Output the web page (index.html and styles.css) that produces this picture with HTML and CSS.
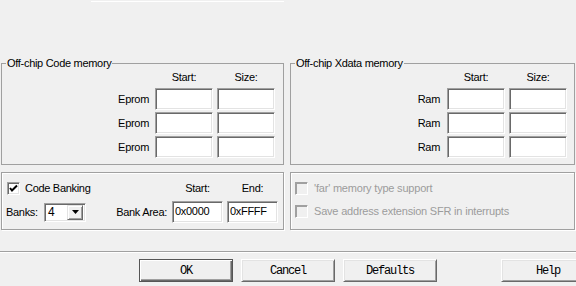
FILE: index.html
```html
<!DOCTYPE html>
<html lang="en">
<head>
    <meta charset="UTF-8">
    <meta name="viewport" content="width=device-width, initial-scale=1.0">
    <title>Options for Target - BL51 Locate</title>
    <link rel="stylesheet" href="styles.css">
</head>
<body>
    <div class="top-edge"></div>

    <div class="memory-row">
        <fieldset class="group group-left">
            <legend>Off-chip Code memory</legend>
            <div class="mem-grid">
                <span></span>
                <span class="col-head">Start:</span>
                <span class="col-head">Size:</span>

                <label class="row-label">Eprom</label>
                <input class="field" type="text">
                <input class="field" type="text">

                <label class="row-label">Eprom</label>
                <input class="field" type="text">
                <input class="field" type="text">

                <label class="row-label">Eprom</label>
                <input class="field" type="text">
                <input class="field" type="text">
            </div>
        </fieldset>

        <fieldset class="group group-right">
            <legend>Off-chip Xdata memory</legend>
            <div class="mem-grid">
                <span></span>
                <span class="col-head">Start:</span>
                <span class="col-head">Size:</span>

                <label class="row-label">Ram</label>
                <input class="field" type="text">
                <input class="field" type="text">

                <label class="row-label">Ram</label>
                <input class="field" type="text">
                <input class="field" type="text">

                <label class="row-label">Ram</label>
                <input class="field" type="text">
                <input class="field" type="text">
            </div>
        </fieldset>
    </div>

    <div class="option-row">
        <div class="box box-left">
            <div class="bank-grid">
                <label class="check-line">
                    <span class="check">
                        <svg width="11" height="11" viewBox="0 0 11 11"><polyline points="2,5 4,7.5 9,2.5" fill="none" stroke="#000" stroke-width="2"/></svg>
                    </span>
                    Code Banking
                </label>
                <span class="col-head">Start:</span>
                <span class="col-head">End:</span>

                <div class="bank-line">
                    <span class="banks-label">Banks:</span>
                    <div class="combo">
                        <span class="combo-value">4</span>
                        <span class="combo-btn">
                            <svg width="7" height="4" viewBox="0 0 7 4"><polygon points="0,0 7,0 3.5,4" fill="#000"/></svg>
                        </span>
                    </div>
                    <span class="area-label">Bank Area:</span>
                </div>
                <input class="field field-text" type="text" value="0x0000">
                <input class="field field-text" type="text" value="0xFFFF">
            </div>
        </div>

        <div class="box box-right">
            <label class="check-line disabled">
                <span class="check"></span>
                'far' memory type support
            </label>
            <label class="check-line disabled">
                <span class="check"></span>
                Save address extension SFR in interrupts
            </label>
        </div>
    </div>

    <div class="separator"></div>

    <div class="buttons">
        <button class="btn btn-default">OK</button>
        <button class="btn">Cancel</button>
        <button class="btn">Defaults</button>
        <button class="btn btn-help">Help</button>
    </div>
</body>
</html>
```

FILE: styles.css
```css
body {
    margin: 0;
    width: 576px;
    height: 286px;
    overflow: hidden;
    background-color: #f0f0f0;
    font-family: "Liberation Sans", Arial, sans-serif;
    font-size: 11px;
    letter-spacing: -0.3px;
    color: #000;
}
.top-edge {
    width: 193px;
    height: 1px;
    margin: 1px 0 0 91px;
    background-color: #fff;
}

/* upper group boxes */
.memory-row {
    display: flex;
    gap: 6px;
    margin: 55px 0 0 1px;
}
.group {
    box-sizing: border-box;
    margin: 0;
    padding: 0 8px 6px 4px;
    border: 1px solid #a0a0a0;
    min-width: 0;
}
.group-left {
    width: 283px;
}
.group-right {
    width: 285px;
    padding-right: 7px;
}
.group legend {
    padding: 0 1px;
    margin-left: 0;
    line-height: 13px;
}
.mem-grid {
    display: grid;
    grid-template-columns: 1fr 58px 58px;
    grid-template-rows: 16px repeat(3, 22px);
    column-gap: 4px;
    row-gap: 2px;
}
.col-head {
    text-align: center;
    line-height: 14px;
    align-self: start;
}
.row-label {
    text-align: right;
    line-height: 22px;
    padding-right: 2px;
}
.group-right .row-label {
    padding-right: 3px;
}
.field {
    box-sizing: border-box;
    width: 100%;
    height: 22px;
    margin: 0;
    padding: 0 2px 3px;
    border: 1px solid;
    border-color: #a0a0a0 #fff #fff #a0a0a0;
    box-shadow: inset 1px 1px 0 #696969, inset -1px -1px 0 #e3e3e3;
    background-color: #fff;
    font-family: "Liberation Sans", Arial, sans-serif;
    font-size: 11px;
    letter-spacing: -0.3px;
    color: #000;
    outline: none;
}

/* lower group boxes */
.option-row {
    display: flex;
    gap: 6px;
    margin: 7px 0 0 1px;
}
.box {
    box-sizing: border-box;
    height: 58px;
    border: 1px solid #a0a0a0;
    box-shadow: inset 1px 1px 0 #fff, 1px 1px 0 #fff;
}
.box-left {
    width: 283px;
    padding: 6px 5px 0 3px;
}
.box-right {
    width: 285px;
    padding: 8px 0 0 4px;
    display: flex;
    flex-direction: column;
    gap: 9px;
}
.bank-grid {
    display: grid;
    grid-template-columns: 1fr 51px 51px;
    grid-template-rows: 18px 22px;
    column-gap: 4px;
    row-gap: 4px;
}
.bank-grid .col-head {
    align-self: center;
}
.check-line {
    display: flex;
    align-items: center;
    gap: 5px;
    line-height: 14px;
}
.box-left .check-line {
    margin-left: 2px;
}
.check {
    box-sizing: border-box;
    width: 13px;
    height: 13px;
    border: 1px solid;
    border-color: #a0a0a0 #fff #fff #a0a0a0;
    box-shadow: inset 1px 1px 0 #696969, inset -1px -1px 0 #e3e3e3;
    background-color: #fff;
    display: flex;
}
.check svg {
    display: block;
}
.disabled {
    color: #9c9c9c;
    letter-spacing: -0.2px;
    gap: 6px;
}
.disabled .check {
    background-color: #f0f0f0;
    box-shadow: inset 1px 1px 0 #a0a0a0, inset -1px -1px 0 #f0f0f0;
}
.bank-line {
    display: flex;
    align-items: center;
    padding-left: 1px;
}
.banks-label {
    width: 38px;
}
.combo {
    box-sizing: border-box;
    width: 42px;
    height: 19px;
    border: 1px solid;
    border-color: #a0a0a0 #fff #fff #a0a0a0;
    box-shadow: inset 1px 1px 0 #696969, inset -1px -1px 0 #e3e3e3;
    background-color: #fff;
    display: flex;
    align-items: center;
    padding: 2px;
}
.combo-value {
    flex: 1;
    padding-left: 1px;
    font-size: 12px;
}
.combo-btn {
    box-sizing: border-box;
    width: 16px;
    height: 15px;
    border: 1px solid;
    border-color: #e3e3e3 #696969 #696969 #e3e3e3;
    box-shadow: inset 1px 1px 0 #fff, inset -1px -1px 0 #a0a0a0;
    background-color: #f0f0f0;
    display: flex;
    align-items: center;
    justify-content: center;
}
.area-label {
    margin-left: auto;
    padding-right: 1px;
}
.field-text {
    padding-top: 0;
}

/* bottom buttons */
.separator {
    height: 1px;
    margin-top: 21px;
    background-color: #a0a0a0;
    border-bottom: 1px solid #fff;
}
.buttons {
    display: flex;
    gap: 8px;
    margin-top: 6px;
    padding-left: 139px;
}
.btn {
    flex: none;
    box-sizing: border-box;
    width: 94px;
    height: 23px;
    padding: 0;
    border: 1px solid;
    border-color: #fff #696969 #696969 #fff;
    box-shadow: inset 1px 1px 0 #e3e3e3, inset -1px -1px 0 #a0a0a0;
    background-color: #f0f0f0;
    font-family: "Liberation Mono", "Courier New", monospace;
    font-size: 12px;
    letter-spacing: -1.2px;
    color: #000;
}
.btn-default {
    border-color: #555;
    box-shadow: inset 1px 1px 0 #fff, inset -1px -1px 0 #696969, inset -2px -2px 0 #a0a0a0;
}
.btn-help {
    margin-left: 56px;
}
```
